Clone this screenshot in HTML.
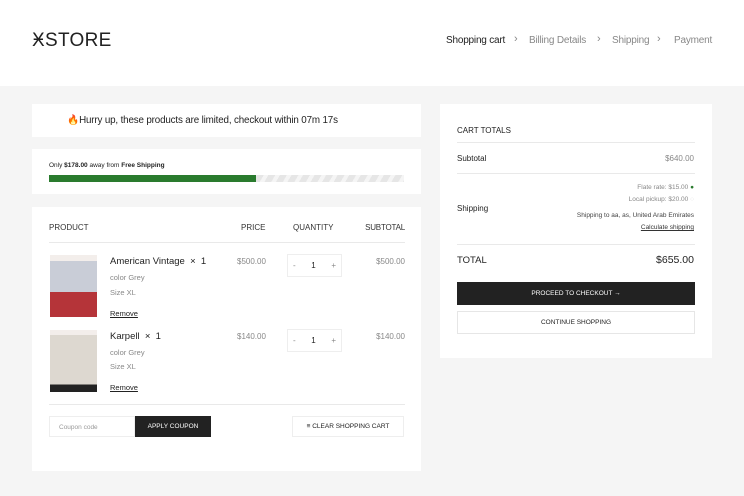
<!DOCTYPE html>
<html><head><meta charset="utf-8"><style>
*{margin:0;padding:0;box-sizing:border-box}
body{width:744px;height:496px;background:#f5f5f5;font-family:"Liberation Sans",sans-serif;color:#222;position:relative;overflow:hidden}
.a{position:absolute;white-space:nowrap}
.p{position:absolute;background:#fff}
.g{color:#888}
.line{position:absolute;height:1px;background:#e9e9e9}
</style></head><body>
<div class="p" style="left:0;top:0;width:744px;height:86px"></div>
<div class="a" style="left:32px;top:30px;font-size:19px;letter-spacing:0.3px;color:#222">ӾSTORE</div>
<div class="a" style="left:446px;top:35px;font-size:10px;letter-spacing:-0.2px;color:#222">Shopping cart</div>
<div class="a g" style="left:514px;top:33px;font-size:11px">›</div>
<div class="a g" style="left:529px;top:35px;font-size:10px;letter-spacing:-0.2px">Billing Details</div>
<div class="a g" style="left:597px;top:33px;font-size:11px">›</div>
<div class="a g" style="left:612px;top:35px;font-size:10px;letter-spacing:-0.2px">Shipping</div>
<div class="a g" style="left:657px;top:33px;font-size:11px">›</div>
<div class="a g" style="left:674px;top:35px;font-size:10px;letter-spacing:-0.2px">Payment</div>

<div class="p" style="left:32px;top:104px;width:389px;height:33px"></div>
<div class="a" style="left:67px;top:115px;font-size:9.8px;letter-spacing:-0.15px"><span style="color:#e8641b">🔥</span>Hurry up, these products are limited, checkout within 07m 17s</div>

<div class="p" style="left:32px;top:149px;width:389px;height:45px"></div>
<div class="a" style="left:49px;top:162px;font-size:6.5px">Only <b>$178.00</b> away from <b>Free Shipping</b></div>
<div class="a" style="left:49px;top:175px;width:355px;height:7px;background:repeating-linear-gradient(120deg,#e6e6e6 0 6px,#f5f5f5 6px 10px)"></div>
<div class="a" style="left:49px;top:175px;width:207px;height:7px;background:#2a7b2e"></div>

<div class="p" style="left:32px;top:207px;width:389px;height:264px"></div>
<div class="a" style="left:49px;top:223px;font-size:8px;color:#333">PRODUCT</div>
<div class="a" style="left:241px;top:223px;font-size:8px;color:#333">PRICE</div>
<div class="a" style="left:293px;top:223px;font-size:8px;color:#333">QUANTITY</div>
<div class="a" style="right:339px;top:223px;font-size:8px;color:#333;right:339px"></div>
<div class="a" style="right:340px;top:223px;font-size:8px;color:#333"></div>
<div class="a" style="left:364px;top:223px;width:41px;text-align:right;font-size:8px;color:#333;letter-spacing:-0.2px">SUBTOTAL</div>
<div class="line" style="left:49px;top:242px;width:356px"></div>

<div class="a" style="left:50px;top:255px;width:47px;height:62px;background:linear-gradient(#f3eeeb 0 10%,#c9cdd7 10% 60%,#b53439 60%)"></div>
<div class="a" style="left:110px;top:256px;font-size:9.5px">American Vintage &nbsp;×&nbsp; 1</div>
<div class="a g" style="left:110px;top:273px;font-size:7.5px">color Grey</div>
<div class="a g" style="left:110px;top:288px;font-size:7.5px">Size XL</div>
<div class="a" style="left:110px;top:309px;font-size:7.5px;text-decoration:underline">Remove</div>
<div class="a g" style="left:237px;top:257px;font-size:8px">$500.00</div>
<div class="a" style="left:287px;top:254px;width:55px;height:23px;border:1px solid #eee;font-size:8px;display:flex;align-items:center;justify-content:space-between;padding:0 5px"><span class="g">-</span><span>1</span><span class="g">+</span></div>
<div class="a g" style="left:365px;top:257px;width:40px;text-align:right;font-size:8px">$500.00</div>

<div class="a" style="left:50px;top:330px;width:47px;height:62px;background:linear-gradient(#f3eeeb 0 8%,#ddd8d0 8% 88%,#222 88%)"></div>
<div class="a" style="left:110px;top:331px;font-size:9.5px">Karpell &nbsp;×&nbsp; 1</div>
<div class="a g" style="left:110px;top:348px;font-size:7.5px">color Grey</div>
<div class="a g" style="left:110px;top:362px;font-size:7.5px">Size XL</div>
<div class="a" style="left:110px;top:383px;font-size:7.5px;text-decoration:underline">Remove</div>
<div class="a g" style="left:237px;top:332px;font-size:8px">$140.00</div>
<div class="a" style="left:287px;top:329px;width:55px;height:23px;border:1px solid #eee;font-size:8px;display:flex;align-items:center;justify-content:space-between;padding:0 5px"><span class="g">-</span><span>1</span><span class="g">+</span></div>
<div class="a g" style="left:365px;top:332px;width:40px;text-align:right;font-size:8px">$140.00</div>
<div class="line" style="left:49px;top:404px;width:356px"></div>

<div class="a" style="left:49px;top:416px;width:86px;height:21px;border:1px solid #eee;font-size:6.5px;color:#999;padding:7px 9px">Coupon code</div>
<div class="a" style="left:135px;top:416px;width:76px;height:21px;background:#222;color:#fff;font-size:6.5px;text-align:center;line-height:21px">APPLY COUPON</div>
<div class="a" style="left:292px;top:416px;width:112px;height:21px;border:1px solid #eee;font-size:6.5px;text-align:center;line-height:20px">≡ CLEAR SHOPPING CART</div>

<div class="p" style="left:440px;top:104px;width:272px;height:254px"></div>
<div class="a" style="left:457px;top:126px;font-size:8px">CART TOTALS</div>
<div class="line" style="left:457px;top:142px;width:238px"></div>
<div class="a" style="left:457px;top:154px;font-size:8px">Subtotal</div>
<div class="a g" style="right:50px;top:154px;font-size:8px">$640.00</div>
<div class="line" style="left:457px;top:173px;width:238px"></div>
<div class="a g" style="right:50px;top:184px;font-size:6.5px">Flate rate: $15.00 <span style="color:#2a7b2e">●</span></div>
<div class="a g" style="right:50px;top:196px;font-size:6.5px">Local pickup: $20.00 <span style="color:#ddd">○</span></div>
<div class="a" style="left:457px;top:204px;font-size:8px">Shipping</div>
<div class="a" style="right:50px;top:212px;font-size:6.5px;color:#444">Shipping to aa, as, United Arab Emirates</div>
<div class="a" style="right:50px;top:224px;font-size:6.5px;color:#333;text-decoration:underline">Calculate shipping</div>
<div class="line" style="left:457px;top:244px;width:238px"></div>
<div class="a" style="left:457px;top:255px;font-size:9.5px">TOTAL</div>
<div class="a" style="right:50px;top:254px;font-size:10.5px">$655.00</div>
<div class="a" style="left:457px;top:282px;width:238px;height:23px;background:#222;color:#fff;font-size:6.5px;text-align:center;line-height:23px">PROCEED TO CHECKOUT →</div>
<div class="a" style="left:457px;top:311px;width:238px;height:23px;border:1px solid #e6e6e6;font-size:6.5px;text-align:center;line-height:22px">CONTINUE SHOPPING</div>
</body></html>
